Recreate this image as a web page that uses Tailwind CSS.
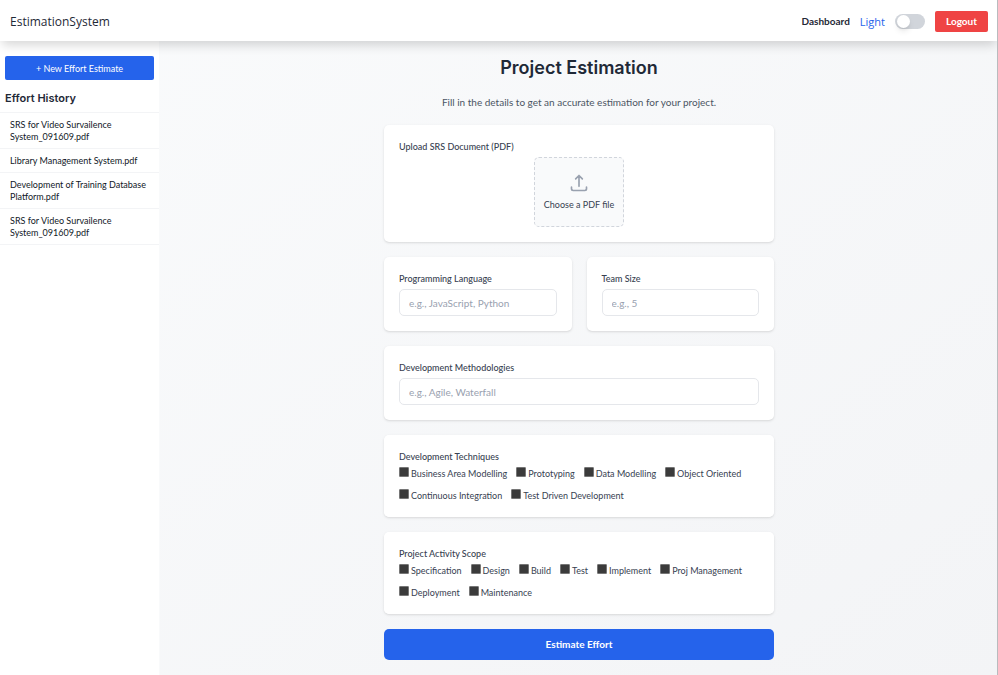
<!DOCTYPE html>
<html lang="en">
<head>
<meta charset="utf-8">
<meta name="viewport" content="width=device-width, initial-scale=1">
<title>EstimationSystem</title>
<script src="https://cdn.jsdelivr.net/npm/@tailwindcss/browser@4"></script>
</head>
<body class="relative flex min-h-screen flex-col bg-white font-['Lato','Open_Sans',sans-serif] text-[9px] leading-[13px] text-[#1f2937] after:absolute after:inset-y-0 after:right-0 after:z-20 after:w-px after:bg-[#b9bbbe]">
<header class="relative z-10 flex h-[41px] items-center justify-between bg-white px-[10px] pt-px shadow-[0_6px_10px_-2px_rgba(0,0,0,0.16)]">
  <a href="#" class="text-[12px] font-medium text-[#1f2937] font-['Open_Sans',sans-serif]">EstimationSystem</a>
  <nav class="flex items-center gap-[10px]">
    <a href="#" class="text-[10px] font-bold text-[#1f2937]">Dashboard</a>
    <label for="theme" class="font-['Open_Sans',sans-serif] text-[11px] text-[#2563eb]">Light</label>
    <span class="relative flex h-[15px] w-[30px]">
      <input id="theme" type="checkbox" class="peer h-[15px] w-[30px] appearance-none rounded-full bg-[#d1d5db]">
      <span class="pointer-events-none absolute top-px left-[2px] size-[13px] rounded-full bg-white shadow-md peer-checked:left-[15px]"></span>
    </span>
    <button type="button" class="h-[21px] w-[53px] rounded-[2px] bg-[#ef4444] text-[10px] font-bold text-white">Logout</button>
  </nav>
</header>
<div class="flex flex-1">
  <aside class="w-[160px] shrink-0 border-r border-gray-50 bg-white pt-[15px]">
    <div class="px-[5px]">
      <button type="button" class="h-6 w-full rounded-[2px] bg-[#2563eb] text-white">+ New Effort Estimate</button>
      <h2 class="pt-3 pb-[7px] font-['Inter',sans-serif] text-[11px] leading-[13px] font-semibold">Effort History</h2>
    </div>
    <ul class="border-t border-gray-100 leading-3 text-[#111827]">
      <li class="border-b border-gray-100 px-[10px] pt-[6px] pb-[5px]"><a href="#" class="block">SRS for Video Survailence System_091609.pdf</a></li>
      <li class="border-b border-gray-100 px-[10px] pt-[6px] pb-[5px]"><a href="#" class="block">Library Management System.pdf</a></li>
      <li class="border-b border-gray-100 px-[10px] pt-[6px] pb-[5px]"><a href="#" class="block">Development of Training Database Platform.pdf</a></li>
      <li class="border-b border-gray-100 px-[10px] pt-[6px] pb-[5px]"><a href="#" class="block">SRS for Video Survailence System_091609.pdf</a></li>
    </ul>
  </aside>
  <main class="flex-1 bg-linear-to-br from-gray-50 to-gray-100 pt-[15px] pb-[15px]">
    <div class="mx-auto max-w-[390px]">
      <h1 class="text-center font-['Inter',sans-serif] text-[18px] leading-6 font-semibold">Project Estimation</h1>
      <p class="mt-[15px] text-center text-[10px] leading-[15px] text-[#4b5563]">Fill in the details to get an accurate estimation for your project.</p>
      <form class="mt-[15px] flex flex-col gap-[15px]">
        <section class="flex flex-col gap-1 rounded-[5px] bg-white p-[15px] shadow-sm">
          <label for="srs" class="font-medium text-[#374151]">Upload SRS Document (PDF)</label>
          <label for="srs" class="flex h-[70px] w-[90px] flex-col items-center justify-center gap-[5px] self-center rounded-[5px] border border-dashed border-gray-300 bg-gray-50 text-[#374151]">
            <svg class="size-5 text-gray-400" viewBox="0 0 24 24" fill="none" stroke="currentColor" stroke-width="2" stroke-linecap="round" stroke-linejoin="round"><path d="M3 17v2a2 2 0 0 0 2 2h14a2 2 0 0 0 2-2v-2M16 7l-4-4-4 4M12 3v13"/></svg>
            <span>Choose a PDF file</span>
            <input id="srs" type="file" accept="application/pdf" class="sr-only">
          </label>
        </section>
        <div class="grid grid-cols-2 gap-[15px]">
          <section class="flex flex-col gap-1 rounded-[5px] bg-white p-[15px] shadow-sm">
            <label for="lang" class="font-medium text-[#374151]">Programming Language</label>
            <input id="lang" type="text" placeholder="e.g., JavaScript, Python" class="h-[27px] w-full rounded-[5px] border border-gray-200 px-[9px] text-[10px] placeholder:text-gray-400">
          </section>
          <section class="flex flex-col gap-1 rounded-[5px] bg-white p-[15px] shadow-sm">
            <label for="team" class="font-medium text-[#374151]">Team Size</label>
            <input id="team" type="text" placeholder="e.g., 5" class="h-[27px] w-full rounded-[5px] border border-gray-200 px-[9px] text-[10px] placeholder:text-gray-400">
          </section>
        </div>
        <section class="flex flex-col gap-1 rounded-[5px] bg-white p-[15px] shadow-sm">
          <label for="method" class="font-medium text-[#374151]">Development Methodologies</label>
          <input id="method" type="text" placeholder="e.g., Agile, Waterfall" class="h-[27px] w-full rounded-[5px] border border-gray-200 px-[9px] text-[10px] placeholder:text-gray-400">
        </section>
        <fieldset class="rounded-[5px] bg-white p-[15px] shadow-sm">
          <legend class="float-left mb-1 w-full font-medium text-[#374151]">Development Techniques</legend>
          <div class="clear-both flex flex-wrap gap-x-[9px] gap-y-[9px] text-[#374151]">
            <label class="flex gap-[2px]"><input type="checkbox" class="size-[10px] appearance-none rounded-[1px] border border-[#767676] bg-[#3b3b3b] checked:bg-blue-600">Business Area Modelling</label>
            <label class="flex gap-[2px]"><input type="checkbox" class="size-[10px] appearance-none rounded-[1px] border border-[#767676] bg-[#3b3b3b] checked:bg-blue-600">Prototyping</label>
            <label class="flex gap-[2px]"><input type="checkbox" class="size-[10px] appearance-none rounded-[1px] border border-[#767676] bg-[#3b3b3b] checked:bg-blue-600">Data Modelling</label>
            <label class="flex gap-[2px]"><input type="checkbox" class="size-[10px] appearance-none rounded-[1px] border border-[#767676] bg-[#3b3b3b] checked:bg-blue-600">Object Oriented</label>
            <label class="flex gap-[2px]"><input type="checkbox" class="size-[10px] appearance-none rounded-[1px] border border-[#767676] bg-[#3b3b3b] checked:bg-blue-600">Continuous Integration</label>
            <label class="flex gap-[2px]"><input type="checkbox" class="size-[10px] appearance-none rounded-[1px] border border-[#767676] bg-[#3b3b3b] checked:bg-blue-600">Test Driven Development</label>
          </div>
        </fieldset>
        <fieldset class="rounded-[5px] bg-white p-[15px] shadow-sm">
          <legend class="float-left mb-1 w-full font-medium text-[#374151]">Project Activity Scope</legend>
          <div class="clear-both flex flex-wrap gap-x-[9px] gap-y-[9px] text-[#374151]">
            <label class="flex gap-[2px]"><input type="checkbox" class="size-[10px] appearance-none rounded-[1px] border border-[#767676] bg-[#3b3b3b] checked:bg-blue-600">Specification</label>
            <label class="flex gap-[2px]"><input type="checkbox" class="size-[10px] appearance-none rounded-[1px] border border-[#767676] bg-[#3b3b3b] checked:bg-blue-600">Design</label>
            <label class="flex gap-[2px]"><input type="checkbox" class="size-[10px] appearance-none rounded-[1px] border border-[#767676] bg-[#3b3b3b] checked:bg-blue-600">Build</label>
            <label class="flex gap-[2px]"><input type="checkbox" class="size-[10px] appearance-none rounded-[1px] border border-[#767676] bg-[#3b3b3b] checked:bg-blue-600">Test</label>
            <label class="flex gap-[2px]"><input type="checkbox" class="size-[10px] appearance-none rounded-[1px] border border-[#767676] bg-[#3b3b3b] checked:bg-blue-600">Implement</label>
            <label class="flex gap-[2px]"><input type="checkbox" class="size-[10px] appearance-none rounded-[1px] border border-[#767676] bg-[#3b3b3b] checked:bg-blue-600">Proj Management</label>
            <label class="flex gap-[2px]"><input type="checkbox" class="size-[10px] appearance-none rounded-[1px] border border-[#767676] bg-[#3b3b3b] checked:bg-blue-600">Deployment</label>
            <label class="flex gap-[2px]"><input type="checkbox" class="size-[10px] appearance-none rounded-[1px] border border-[#767676] bg-[#3b3b3b] checked:bg-blue-600">Maintenance</label>
          </div>
        </fieldset>
        <button type="submit" class="h-[31px] rounded-[5px] bg-[#2563eb] text-[10px] font-bold text-white">Estimate Effort</button>
      </form>
    </div>
  </main>
</div>
</body>
</html>
